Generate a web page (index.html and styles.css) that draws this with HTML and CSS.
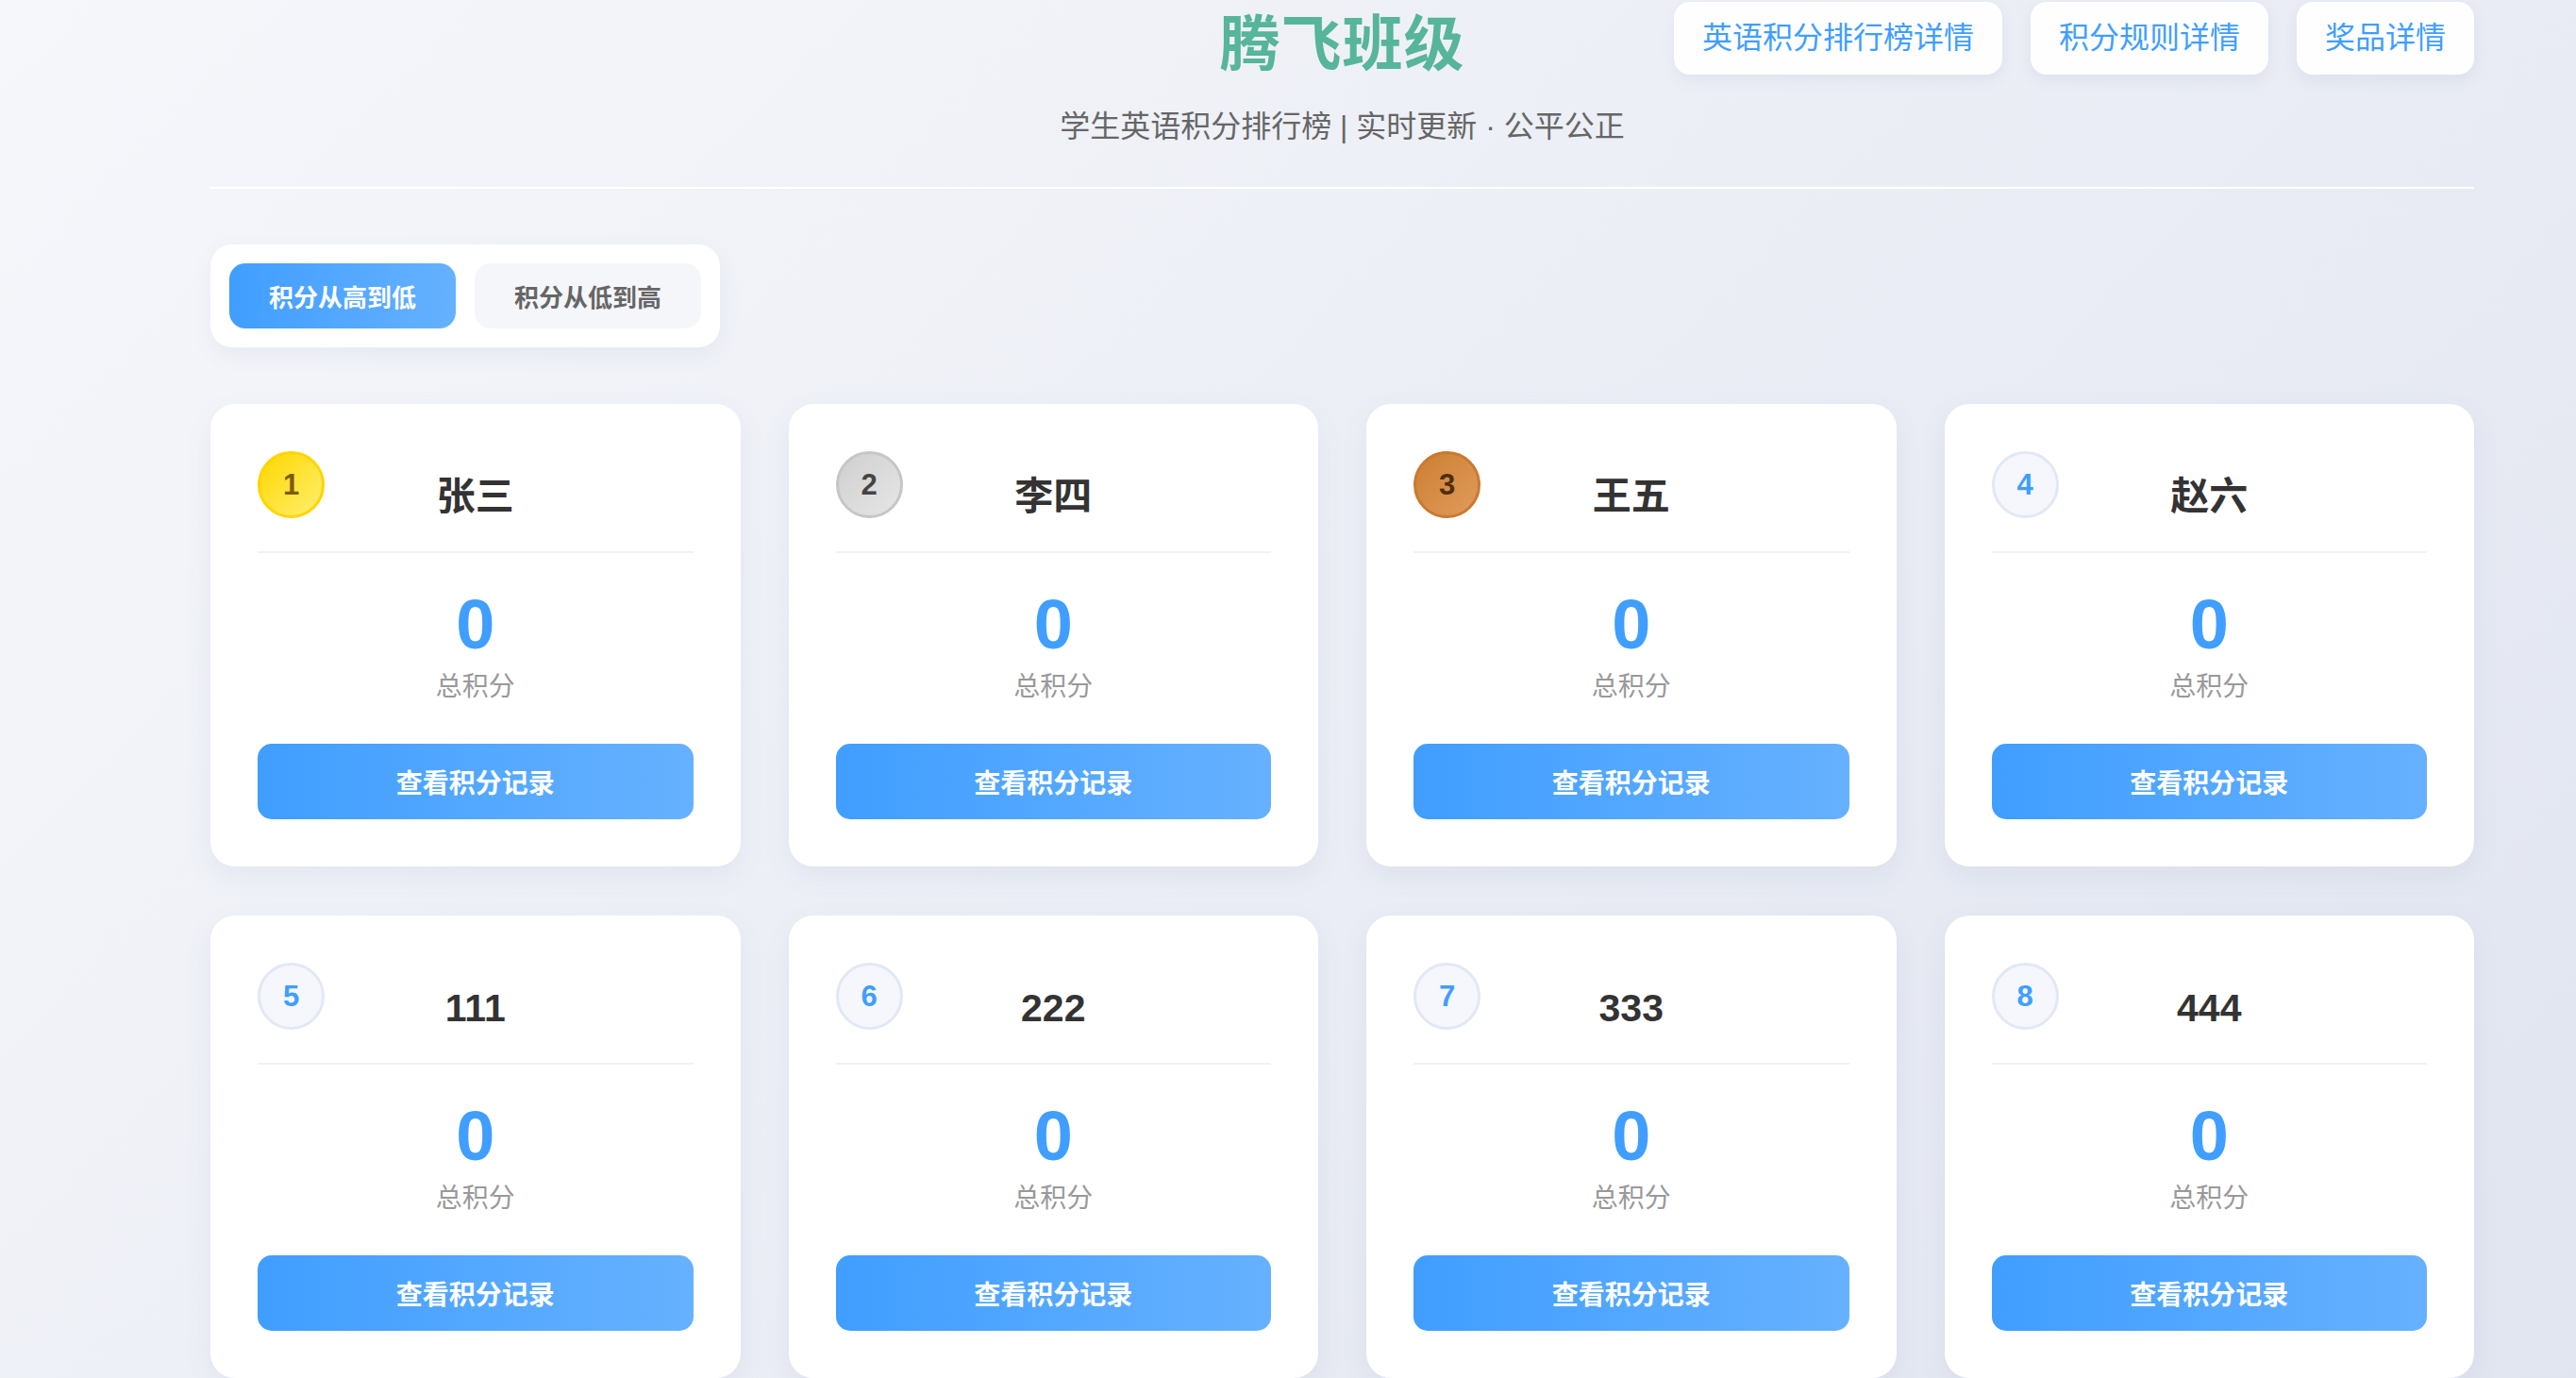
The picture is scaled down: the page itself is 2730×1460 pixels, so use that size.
FILE: index.html
```html
<!DOCTYPE html>
<html lang="zh-CN">
<head>
<meta charset="UTF-8">
<title>腾飞班级</title>
<link rel="stylesheet" href="styles.css">
</head>
<body>
<div class="page">
  <header class="header">
    <div class="header-top">
      <div class="spacer"></div>
      <h1 class="title">腾飞班级</h1>
      <nav class="top-links">
        <a class="top-btn">英语积分排行榜详情</a>
        <a class="top-btn">积分规则详情</a>
        <a class="top-btn">奖品详情</a>
      </nav>
    </div>
    <p class="subtitle">学生英语积分排行榜 | 实时更新 · 公平公正</p>
  </header>

  <div class="sort-panel">
    <button class="sort-btn active">积分从高到低</button>
    <button class="sort-btn">积分从低到高</button>
  </div>

  <main class="grid">
    <div class="card"><span class="rank gold">1</span><div class="card-head"><div class="name">张三</div></div><div class="score">0</div><div class="label">总积分</div><button class="record-btn">查看积分记录</button></div>
    <div class="card"><span class="rank silver">2</span><div class="card-head"><div class="name">李四</div></div><div class="score">0</div><div class="label">总积分</div><button class="record-btn">查看积分记录</button></div>
    <div class="card"><span class="rank bronze">3</span><div class="card-head"><div class="name">王五</div></div><div class="score">0</div><div class="label">总积分</div><button class="record-btn">查看积分记录</button></div>
    <div class="card"><span class="rank">4</span><div class="card-head"><div class="name">赵六</div></div><div class="score">0</div><div class="label">总积分</div><button class="record-btn">查看积分记录</button></div>
    <div class="card"><span class="rank">5</span><div class="card-head"><div class="name">111</div></div><div class="score">0</div><div class="label">总积分</div><button class="record-btn">查看积分记录</button></div>
    <div class="card"><span class="rank">6</span><div class="card-head"><div class="name">222</div></div><div class="score">0</div><div class="label">总积分</div><button class="record-btn">查看积分记录</button></div>
    <div class="card"><span class="rank">7</span><div class="card-head"><div class="name">333</div></div><div class="score">0</div><div class="label">总积分</div><button class="record-btn">查看积分记录</button></div>
    <div class="card"><span class="rank">8</span><div class="card-head"><div class="name">444</div></div><div class="score">0</div><div class="label">总积分</div><button class="record-btn">查看积分记录</button></div>
  </main>
</div>
</body>
</html>
```

FILE: styles.css
```css
html, body {
  margin: 0;
  padding: 0;
}

body {
  font-family: "Liberation Sans", "Noto Sans CJK SC", sans-serif;
  background: linear-gradient(135deg, #f6f7fb 0%, #e1e5f0 100%) fixed;
  min-height: 100vh;
  color: #333;
}

.page {
  margin: 0 108px 0 223px;
  padding-bottom: 80px;
}

.header {
  padding-top: 2px;
  padding-bottom: 42px;
  border-bottom: 2px solid rgba(255, 255, 255, 0.95);
  text-align: center;
}

.header-top {
  display: grid;
  grid-template-columns: 1fr auto 1fr;
  align-items: start;
}

.title {
  margin: 6px 0 0;
  font-size: 64px;
  line-height: 78px;
  font-weight: 700;
  color: #56b59b;
  letter-spacing: 1px;
}

.top-links {
  display: flex;
  justify-content: flex-end;
  gap: 30px;
}

.top-btn {
  display: block;
  height: 77px;
  line-height: 77px;
  padding: 0 30px;
  background: rgba(255, 255, 255, 0.92);
  border-radius: 17px;
  box-shadow: 0 6px 16px rgba(80, 100, 140, 0.08);
  color: #409eff;
  font-size: 32px;
  white-space: nowrap;
}

.subtitle {
  margin: 26px 0 0;
  font-size: 32px;
  line-height: 44px;
  color: #666;
}

.sort-panel {
  display: inline-flex;
  gap: 20px;
  margin-top: 59px;
  padding: 20px;
  background: #fff;
  border-radius: 23px;
  box-shadow: 0 8px 24px rgba(80, 100, 140, 0.07);
}

.sort-btn {
  width: 240px;
  height: 69px;
  border: none;
  border-radius: 17px;
  background: #f5f6fa;
  color: #666;
  font-family: inherit;
  font-size: 26px;
  font-weight: 700;
  cursor: pointer;
}

.sort-btn.active {
  background: linear-gradient(90deg, #409eff, #66b1ff);
  color: #fff;
}

.grid {
  display: grid;
  grid-template-columns: repeat(4, 1fr);
  gap: 52px 51px;
  margin-top: 60px;
}

.card {
  position: relative;
  background: #fff;
  border-radius: 26px;
  padding: 50px;
  box-shadow: 0 10px 30px rgba(80, 100, 140, 0.08);
  text-align: center;
}

.rank {
  position: absolute;
  top: 50px;
  left: 50px;
  box-sizing: border-box;
  width: 71px;
  height: 71px;
  border-radius: 50%;
  border: 3px solid #e1e8f5;
  background: #f5f7fc;
  color: #409eff;
  font-size: 31px;
  font-weight: 700;
  line-height: 65px;
  text-align: center;
}

.rank.gold {
  background: linear-gradient(135deg, #ffd700, #ffef6e);
  border-color: #ffd400;
  color: #7d5a00;
}

.rank.silver {
  background: linear-gradient(135deg, #cfcfcf, #e6e6e6);
  border-color: #c6c6c6;
  color: #444;
}

.rank.bronze {
  background: linear-gradient(135deg, #cd7f32, #e09b5c);
  border-color: #c97a30;
  color: #4f2f0c;
}

.card-head {
  padding: 20px 0 30px;
  border-bottom: 2px solid #f0f2f5;
}

.name {
  font-size: 41px;
  line-height: 56px;
  font-weight: 700;
  color: #333;
}

.score {
  margin-top: 33px;
  font-size: 74px;
  line-height: 86px;
  font-weight: 700;
  color: #409eff;
}

.label {
  margin-top: 3px;
  font-size: 28px;
  line-height: 40px;
  color: #999;
}

.record-btn {
  display: block;
  width: 100%;
  height: 80px;
  margin-top: 40px;
  border: none;
  border-radius: 15px;
  background: linear-gradient(90deg, #409eff, #66b1ff);
  color: #fff;
  font-family: inherit;
  font-size: 28px;
  font-weight: 700;
  cursor: pointer;
}
```
